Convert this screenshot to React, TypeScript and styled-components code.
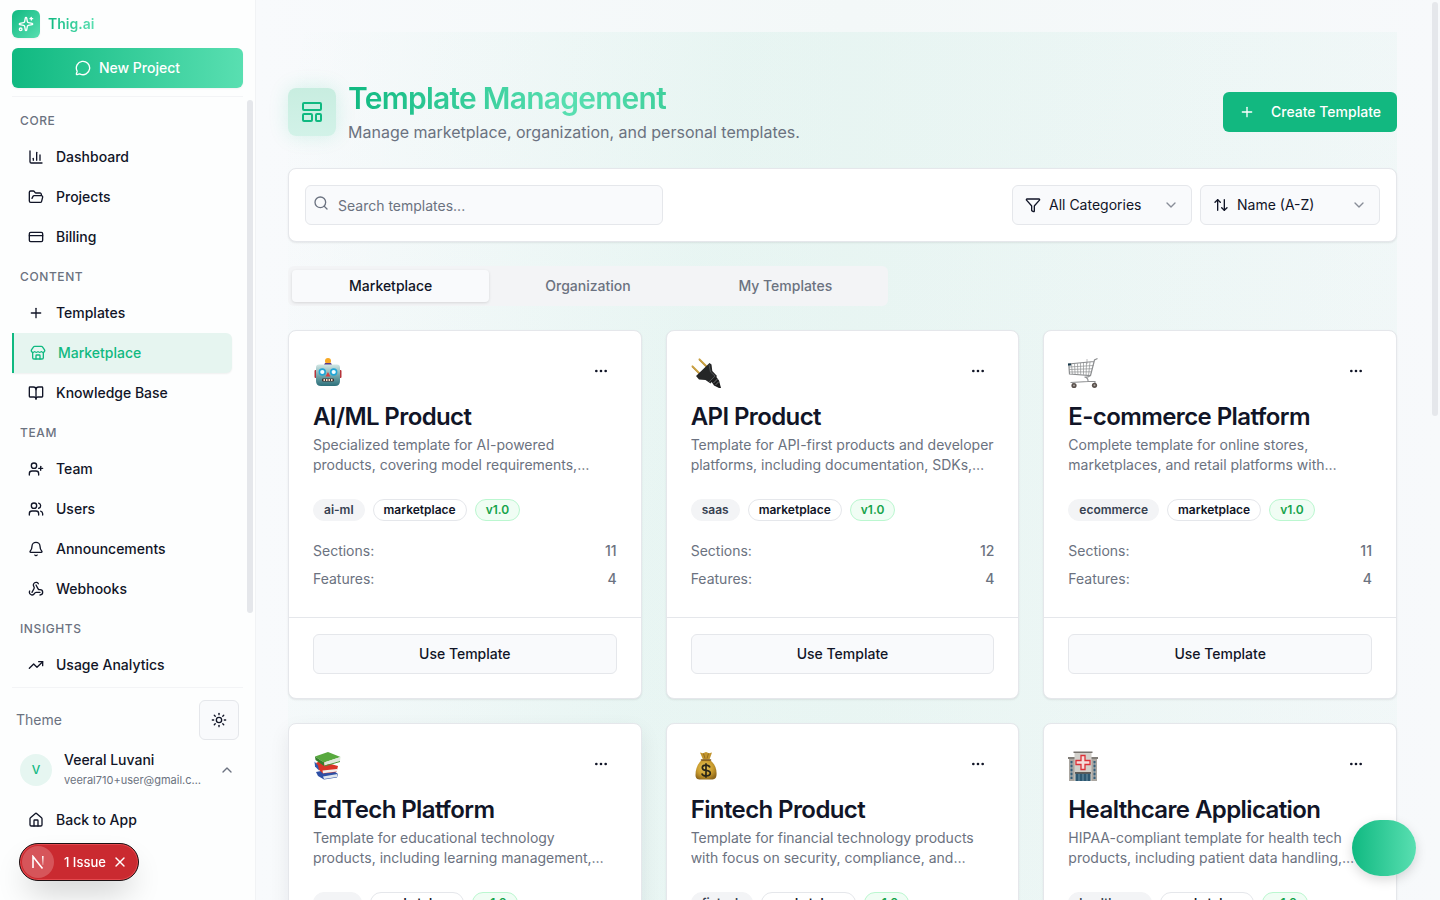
import React from "react";
import styled, { createGlobalStyle, css } from "styled-components";
import {
  ArrowUpDown,
  Bell,
  BookOpen,
  ChartColumn,
  ChevronDown,
  ChevronUp,
  CreditCard,
  Ellipsis,
  FolderOpen,
  Funnel,
  House,
  LayoutTemplate,
  MessageCircle,
  Plus,
  Search,
  Sparkles,
  Store,
  Sun,
  TrendingUp,
  UserPlus,
  Users,
  Webhook,
  X,
  type LucideIcon,
} from "lucide-react";

const color = {
  primary: "#10b981",
  primaryLight: "#59dfb1",
  ink: "#111527",
  muted: "#6b7280",
  border: "#e5e7eb",
  field: "#f9fafc",
  chip: "#f3f4f6",
};

const brandGradient = `linear-gradient(90deg, ${color.primary}, ${color.primaryLight})`;

const GlobalStyle = createGlobalStyle`
  *, *::before, *::after { box-sizing: border-box; }
  body {
    margin: 0;
    font-family: Inter, "Liberation Sans", sans-serif;
    font-size: 14px;
    line-height: 20px;
    color: ${color.ink};
    -webkit-font-smoothing: antialiased;
  }
  h1, h2, h3, p, ul, dl, dd { margin: 0; padding: 0; }
  button, input, select { font: inherit; color: inherit; }
  button { cursor: pointer; }
  a { color: inherit; text-decoration: none; }
  svg { flex-shrink: 0; display: block; }
`;

const Shell = styled.div`
  display: flex;
  height: 100vh;
  overflow: hidden;
`;

/* ---------- Sidebar ---------- */

const Sidebar = styled.aside`
  position: relative;
  display: flex;
  flex-direction: column;
  flex: none;
  width: 256px;
  padding: 10px 12px 0;
  background: #fdfefe;
  border-right: 1px solid #f1f3f5;
`;

const Brand = styled.a`
  display: flex;
  align-items: center;
  gap: 8px;
  align-self: flex-start;
`;

const BrandMark = styled.span`
  display: grid;
  place-items: center;
  width: 28px;
  height: 28px;
  border-radius: 6px;
  color: #fff;
  background: linear-gradient(135deg, ${color.primary}, ${color.primaryLight});
  box-shadow: 0 1px 2px rgba(0, 0, 0, 0.05);
`;

const BrandName = styled.span`
  font-weight: 600;
  background: ${brandGradient};
  background-clip: text;
  color: transparent;
`;

const NewProject = styled.button`
  display: flex;
  align-items: center;
  justify-content: center;
  gap: 8px;
  flex: none;
  height: 40px;
  margin: 10px 0 8px;
  border: 0;
  border-radius: 6px;
  font-weight: 500;
  color: #fff;
  background: ${brandGradient};
  box-shadow: 0 1px 2px rgba(0, 0, 0, 0.05);
`;

const NavScroll = styled.nav`
  flex: 1;
  min-height: 0;
  overflow: hidden;
  padding: 4px 11px 0 0;
  border-top: 1px solid #f3f4f6;
`;

const NavHeading = styled.h2`
  padding: 12px 8px 8px;
  font-size: 12px;
  line-height: 16px;
  font-weight: 500;
  letter-spacing: 0.05em;
  text-transform: uppercase;
  color: ${color.muted};
`;

const NavLink = styled.a<{ $active?: boolean }>`
  display: flex;
  align-items: center;
  gap: 12px;
  height: 40px;
  padding: 0 16px;
  border-radius: 6px;
  font-weight: 500;
  ${({ $active }) =>
    $active &&
    css`
      color: ${color.primary};
      background: #e6f5f0;
      border-left: 2px solid ${color.primary};
      border-radius: 0 6px 6px 0;
      box-shadow: 0 1px 2px rgba(0, 0, 0, 0.06);
    `}
`;

const ScrollThumb = styled.span<{ $place: "nav" | "page" }>`
  position: absolute;
  width: 6px;
  border-radius: 3px;
  background: ${color.border};
  ${({ $place }) =>
    $place === "nav"
      ? css`
          right: 2px;
          top: 100px;
          height: 57%;
        `
      : css`
          right: 2px;
          top: 2px;
          height: 46%;
        `}
`;

const SidebarFooter = styled.div`
  flex: none;
  height: 213px;
  padding: 12px 4px 0;
  border-top: 1px solid #f3f4f6;
`;

const ThemeRow = styled.div`
  display: flex;
  align-items: center;
  justify-content: space-between;
  color: ${color.muted};
`;

const ThemeButton = styled.button`
  display: grid;
  place-items: center;
  width: 40px;
  height: 40px;
  padding: 0;
  border: 1px solid ${color.border};
  border-radius: 6px;
  color: ${color.ink};
  background: ${color.field};
`;

const UserButton = styled.button`
  display: flex;
  align-items: center;
  gap: 12px;
  width: 100%;
  height: 60px;
  padding: 0 4px;
  border: 0;
  background: none;
  text-align: left;
`;

const Avatar = styled.span`
  display: grid;
  place-items: center;
  flex: none;
  width: 32px;
  height: 32px;
  border-radius: 50%;
  font-size: 12px;
  font-weight: 500;
  color: ${color.primary};
  background: #e6f6f1;
`;

const UserText = styled.span`
  flex: 1;
  min-width: 0;
  display: grid;
`;

const UserName = styled.span`
  font-weight: 500;
`;

const UserEmail = styled.span`
  overflow: hidden;
  text-overflow: ellipsis;
  white-space: nowrap;
  font-size: 11px;
  color: ${color.muted};
`;

const UserChevron = styled(ChevronUp)`
  margin-left: 4px;
  color: ${color.muted};
`;

const BackLink = styled(NavLink)`
  padding: 0 12px;
`;

const IssueBadge = styled.div`
  position: fixed;
  left: 19px;
  bottom: 19px;
  display: flex;
  align-items: center;
  height: 38px;
  width: 120px;
  padding: 2px;
  border: 1px solid #1c1214;
  border-radius: 19px;
  font-size: 13px;
  font-weight: 500;
  color: #fff;
  background: #ca2a30;
  box-shadow: inset 0 0 0 1px #e5484d, 0 16px 32px -8px rgba(0, 0, 0, 0.24);
`;

const IssueMark = styled.span`
  display: grid;
  place-items: center;
  width: 32px;
  height: 32px;
  border-radius: 50%;
  background: #d6555a;
`;

const IssueButton = styled.button<{ $text?: boolean }>`
  display: flex;
  padding: 0;
  border: 0;
  background: none;
  margin-left: ${({ $text }) => ($text ? "10px" : "6px")};
`;

/* ---------- Main area ---------- */

const Main = styled.main`
  position: relative;
  flex: 1;
  min-width: 0;
  overflow: hidden;
  padding: 32px 43px 32px 32px;
  background: linear-gradient(90deg, #f8fafc 0%, #f3f8f8 50%, #f7f9fb 100%);
`;

const Page = styled.div`
  display: flex;
  flex-direction: column;
  gap: 24px;
  padding-top: 48px;
  background: linear-gradient(
    100deg,
    rgba(16, 185, 129, 0) 0%,
    rgba(16, 185, 129, 0.055) 35%,
    rgba(16, 185, 129, 0.045) 60%,
    rgba(16, 185, 129, 0.02) 100%
  );
`;

const PageHeader = styled.header`
  display: flex;
  align-items: center;
  justify-content: space-between;
`;

const HeaderLead = styled.div`
  display: flex;
  align-items: center;
  gap: 12px;
`;

const HeaderIcon = styled.span`
  display: grid;
  place-items: center;
  width: 48px;
  height: 48px;
  border-radius: 8px;
  color: ${color.primary};
  background: linear-gradient(180deg, #c8ede0, #d2f2e8);
  box-shadow: 0 0 20px rgba(16, 185, 129, 0.15);
`;

const Title = styled.h1`
  width: fit-content;
  margin-bottom: 4px;
  font-size: 30px;
  line-height: 36px;
  font-weight: 600;
  letter-spacing: -0.025em;
  background: linear-gradient(
    90deg,
    ${color.primary},
    ${color.primaryLight} 70%,
    #3fd09c
  );
  background-clip: text;
  color: transparent;
`;

const Subtitle = styled.p`
  font-size: 16px;
  line-height: 24px;
  color: ${color.muted};
`;

const CreateButton = styled.button`
  display: flex;
  align-items: center;
  gap: 16px;
  height: 40px;
  padding: 0 16px;
  border: 0;
  border-radius: 6px;
  font-weight: 500;
  color: #fff;
  background: #12b880;
`;

const surface = css`
  border: 1px solid ${color.border};
  border-radius: 8px;
  background: #fff;
  box-shadow: 0 1px 2px rgba(0, 0, 0, 0.08);
`;

const FilterBar = styled.form`
  ${surface}
  display: flex;
  align-items: center;
  justify-content: space-between;
  padding: 16px;
`;

const SearchField = styled.label`
  position: relative;
  width: 33.33%;
  color: ${color.muted};

  svg {
    position: absolute;
    left: 8px;
    top: 10px;
  }
`;

const fieldBox = css`
  width: 100%;
  height: 40px;
  border: 1px solid ${color.border};
  border-radius: 6px;
  background: ${color.field};
  outline: none;
`;

const SearchInput = styled.input`
  ${fieldBox}
  display: block;
  padding: 0 12px 0 32px;

  &::placeholder {
    color: ${color.muted};
    opacity: 1;
  }
`;

const SelectGroup = styled.div`
  display: flex;
  gap: 8px;
`;

const SelectField = styled.label`
  position: relative;
  width: 180px;

  svg {
    position: absolute;
    top: 12px;
    left: 13px;
    pointer-events: none;
  }

  svg:last-child {
    left: auto;
    right: 13px;
    color: #888d98;
  }
`;

const SelectInput = styled.select`
  ${fieldBox}
  appearance: none;
  display: block;
  padding: 0 36px;
`;

const TabList = styled.div`
  display: grid;
  grid-template-columns: repeat(3, 1fr);
  max-width: 600px;
  padding: 4px;
  border-radius: 6px;
  background: #f3f4f6;
`;

const Tab = styled.button<{ $active?: boolean }>`
  height: 32px;
  padding: 0;
  border: 0;
  border-radius: 4px;
  font-weight: 500;
  color: ${({ $active }) => ($active ? color.ink : color.muted)};
  background: ${({ $active }) => ($active ? color.field : "transparent")};
  box-shadow: ${({ $active }) =>
    $active ? "0 1px 3px rgba(0, 0, 0, 0.12)" : "none"};
`;

const CardGrid = styled.div`
  display: grid;
  grid-template-columns: repeat(3, minmax(0, 1fr));
  gap: 24px;
`;

const Card = styled.article<{ $raised?: boolean }>`
  ${surface}
  ${({ $raised }) =>
    $raised &&
    css`
      box-shadow: 0 8px 20px rgba(15, 23, 42, 0.08);
    `}
`;

const CardBody = styled.div`
  padding: 24px 24px 28px;
`;

const CardTop = styled.div`
  display: flex;
  align-items: flex-start;
  justify-content: space-between;
  height: 36px;
  margin-bottom: 12px;
`;

const EmojiSvg = styled.svg`
  width: 30px;
  height: 36px;
`;

const MoreButton = styled.button`
  display: grid;
  place-items: center;
  width: 32px;
  height: 32px;
  padding: 0;
  border: 0;
  background: none;
`;

const CardTitle = styled.h3`
  margin-bottom: 4px;
  font-size: 24px;
  line-height: 28px;
  font-weight: 600;
  letter-spacing: -0.025em;
`;

const CardText = styled.p`
  display: -webkit-box;
  -webkit-box-orient: vertical;
  -webkit-line-clamp: 2;
  overflow: hidden;
  color: ${color.muted};
`;

const Badges = styled.div`
  display: flex;
  gap: 8px;
  margin: 24px 0 20px;
`;

const badgeTone = {
  plain: css`
    border-color: ${color.chip};
    background: ${color.chip};
    color: #374151;
  `,
  outline: css`
    border-color: ${color.border};
  `,
  version: css`
    border-color: #bbf7d0;
    background: #f0fdf4;
    color: #16a34a;
  `,
};

const Badge = styled.span<{ $tone: keyof typeof badgeTone }>`
  padding: 2px 10px;
  border: 1px solid;
  border-radius: 11px;
  font-size: 12px;
  line-height: 16px;
  font-weight: 600;
  ${({ $tone }) => badgeTone[$tone]}
`;

const Stats = styled.dl`
  display: grid;
  gap: 8px;
  color: ${color.muted};
`;

const Stat = styled.div`
  display: flex;
  justify-content: space-between;

  dd {
    font-weight: 500;
  }
`;

const CardFooter = styled.div`
  padding: 16px 24px 24px;
  border-top: 1px solid ${color.border};
`;

const UseButton = styled.button`
  ${fieldBox}
  display: block;
  font-weight: 500;
`;

const Fab = styled.button`
  position: fixed;
  right: 24px;
  bottom: 24px;
  width: 64px;
  height: 56px;
  border: 0;
  border-radius: 28px;
  background: ${brandGradient};
  box-shadow: 0 4px 12px rgba(0, 0, 0, 0.15);
`;

/* ---------- Card pictures ---------- */

const RobotArt = () => (
  <EmojiSvg viewBox="0 0 30 36" aria-hidden="true">
    <defs>
      <linearGradient id="robotFace" x1="0" y1="0" x2="0" y2="1">
        <stop offset="0" stopColor="#d3e8e6" />
        <stop offset="0.55" stopColor="#6fa3a8" />
        <stop offset="1" stopColor="#2b6f7a" />
      </linearGradient>
    </defs>
    <circle cx="15" cy="6" r="3" fill="#f7a823" />
    <path d="M12 8h6l1 2h-8z" fill="#5a3c86" />
    <rect x="1.500" y="15" width="3" height="8" rx="1" fill="#b5343a" />
    <rect x="25.500" y="15" width="3" height="8" rx="1" fill="#b5343a" />
    <path d="M6 9.500h18q3 0 3 3V26q0 5-5 5H8q-5 0-5-5V12.500q0-3 3-3z" fill="url(#robotFace)" />
    <circle cx="9.300" cy="17" r="3.700" fill="#20a6d6" />
    <circle cx="20.700" cy="17" r="3.700" fill="#20a6d6" />
    <circle cx="9.300" cy="17" r="2.100" fill="#f3fdff" />
    <circle cx="20.700" cy="17" r="2.100" fill="#f3fdff" />
    <path d="M15 17l2.400 4.500h-4.800z" fill="#d9403f" />
    <rect x="9" y="23.500" width="12" height="3" rx="1" fill="#3f3331" />
    <path d="M10.500 25h1.500M13 25h1.500M15.500 25H17M18 25h1.500" stroke="#f0d9c5" strokeWidth="2" />
  </EmojiSvg>
);

const PlugArt = () => (
  <EmojiSvg viewBox="0 0 30 36" aria-hidden="true">
    <path d="M1 11l8 8M8 4l8 8" stroke="#b98c2d" strokeWidth="1.800" />
    <path d="M1 10.500l8 8M8 3.500l8 8" stroke="#e6c56c" strokeWidth="0.700" />
    <path d="M18.500 8l2 1.500.8 6.500 4.700 5-6.500 7.500-5-3.500-6.500-.5-3-3.500z" fill="#252627" />
    <path d="M18 9.500l1.500 7.500 4.500 4-6 6" fill="none" stroke="#55585a" strokeWidth="0.900" />
    <path d="M20 26l5-4.500 3 4 2 7.500h-2l-5-2.500z" fill="#1b1b1c" />
    <path d="M22.500 28l4-4M24.500 30l3.500-3.500" stroke="#77797b" strokeWidth="0.900" />
  </EmojiSvg>
);

const CartArt = () => (
  <EmojiSvg viewBox="0 0 30 36" aria-hidden="true">
    <g fill="none" stroke="#8d8f91">
      <path d="M29.500 3.500l-3 1.500-4 15.500L1.500 19 .8 9l25-2.500" strokeWidth="1.200" />
      <path d="M3.500 9l.8 10M6.500 8.500l.6 10.700M9.500 8.500l.4 11M12.500 8l.2 11.500M15.500 8v11.700M18.500 7.500l-.4 12.500M22 7l-1.400 13M1 12l24.500-1.500M1.200 14.500l23.500-.8M1.400 17l22.500-.2" strokeWidth="0.700" />
      <path d="M22 20.500q-1 2-5.500 1.500 4 1 3.500 4.500L2.500 27.500M20 26.500h7V30M5 27.500V31" strokeWidth="1.100" />
      <path d="M19 4v5" strokeWidth="0.600" />
    </g>
    <rect x="0" y="8.500" width="3" height="2" fill="#16384b" />
    <circle cx="6" cy="30.500" r="2.600" fill="#5a514d" />
    <circle cx="26.500" cy="30.300" r="2.600" fill="#5a514d" />
    <circle cx="6" cy="30.500" r="1" fill="#aaa4a0" />
    <circle cx="26.500" cy="30.300" r="1" fill="#aaa4a0" />
  </EmojiSvg>
);

const BooksArt = () => (
  <EmojiSvg viewBox="0 0 30 36" aria-hidden="true">
    <path d="M3 24l15-3 7 5-1 3.500-13 2-6-3.500z" fill="#2e4fa5" />
    <path d="M10 28.500l14.500-2.500-.5 3-13 2z" fill="#dfe6ee" />
    <path d="M3 15l4-2 18 5-1.500 6-13.500 1.500L5 21z" fill="#d93526" />
    <path d="M9.500 22.500l14.500-1.500v2.500l-14 1.800z" fill="#f5efeb" />
    <path d="M1.500 13.500l.5 5 4 4-1-5z" fill="#315ab0" />
    <path d="M2 8.500l13-4.500L27.500 9 11 14.500z" fill="#58a93e" />
    <path d="M2 8.500l9 6V18L2.500 12z" fill="#347f2b" />
    <path d="M11 14.500L27.500 9l-.5 4L11.500 17.500z" fill="#dfe9da" />
    <path d="M11.500 18L27 13.500" stroke="#4a9638" strokeWidth="1" />
  </EmojiSvg>
);

const MoneyArt = () => (
  <EmojiSvg viewBox="0 0 30 36" aria-hidden="true">
    <defs>
      <radialGradient id="moneyBag" cx="0.45" cy="0.4" r="0.65">
        <stop offset="0" stopColor="#e9c75c" />
        <stop offset="0.6" stopColor="#c99b2d" />
        <stop offset="1" stopColor="#8d661b" />
      </radialGradient>
    </defs>
    <path d="M9 4.500l3 .8 3-1.300 3 1.300 3-.8-2.500 7h-6.500z" fill="#c2952f" />
    <path d="M12.500 5.500l1.500 5M17.500 5.500l-1.500 5" stroke="#87621b" strokeWidth="0.800" />
    <path d="M11 12h8c5 4 7 9 6.500 15-.3 3.500-2 4.500-5 4.500h-11c-3.500 0-5-1.300-5-4.500C4.500 21 6.500 15.500 11 12z" fill="url(#moneyBag)" />
    <path d="M10.500 12h9" stroke="#7c551a" strokeWidth="1.600" strokeLinecap="round" />
    <path d="M19 19.500q-1-2.300-4-2.300-3.700 0-3.700 2.500 0 2.300 3.800 2.700 4.200.5 4.200 2.900 0 2.600-4.200 2.600-3.600 0-4.300-2.500M15 15.300v14.500" fill="none" stroke="#2b2718" strokeWidth="1.700" />
  </EmojiSvg>
);

const HospitalArt = () => (
  <EmojiSvg viewBox="0 0 30 36" aria-hidden="true">
    <path d="M1 10h28v23H1z" fill="#aaa6a0" />
    <path d="M0 9h30v2H0z" fill="#817d78" />
    <path d="M6.500 4h17v29h-17z" fill="#d2cfca" />
    <path d="M5.500 3.500h19V5h-19z" fill="#77736f" />
    <path d="M2.500 13h2v18h-2zM25.500 13h2v18h-2z" fill="#355f7c" />
    <path d="M2 16h3M2 20h3M2 24h3M2 28h3M25 16h3M25 20h3M25 24h3M25 28h3" stroke="#c2beb8" strokeWidth="1.200" />
    <path d="M13 7.500h4v5h5v4h-5v5h-4v-5H8v-4h5z" fill="#f6dcda" stroke="#dc3038" strokeWidth="1.300" />
    <path d="M7.500 25h15v8h-15z" fill="#2d5872" />
    <path d="M7 24h16v1.800H7z" fill="#5e5b58" />
    <path d="M11 26v7M15 26v7M19 26v7" stroke="#82a4b5" strokeWidth="0.800" />
  </EmojiSvg>
);

/* ---------- Data ---------- */

type NavItem = { label: string; icon: LucideIcon; active?: boolean };

const navGroups: { heading: string; items: NavItem[] }[] = [
  {
    heading: "Core",
    items: [
      { label: "Dashboard", icon: ChartColumn },
      { label: "Projects", icon: FolderOpen },
      { label: "Billing", icon: CreditCard },
    ],
  },
  {
    heading: "Content",
    items: [
      { label: "Templates", icon: Plus },
      { label: "Marketplace", icon: Store, active: true },
      { label: "Knowledge Base", icon: BookOpen },
    ],
  },
  {
    heading: "Team",
    items: [
      { label: "Team", icon: UserPlus },
      { label: "Users", icon: Users },
      { label: "Announcements", icon: Bell },
      { label: "Webhooks", icon: Webhook },
    ],
  },
  {
    heading: "Insights",
    items: [{ label: "Usage Analytics", icon: TrendingUp }],
  },
];

type Template = {
  name: string;
  text: string;
  category: string;
  sections: number;
  features: number;
  Art: () => React.JSX.Element;
  raised?: boolean;
};

const templates: Template[] = [
  {
    name: "AI/ML Product",
    text: "Specialized template for AI-powered products, covering model requirements,…",
    category: "ai-ml",
    sections: 11,
    features: 4,
    Art: RobotArt,
  },
  {
    name: "API Product",
    text: "Template for API-first products and developer platforms, including documentation, SDKs,…",
    category: "saas",
    sections: 12,
    features: 4,
    Art: PlugArt,
  },
  {
    name: "E-commerce Platform",
    text: "Complete template for online stores, marketplaces, and retail platforms with…",
    category: "ecommerce",
    sections: 11,
    features: 4,
    Art: CartArt,
  },
  {
    name: "EdTech Platform",
    text: "Template for educational technology products, including learning management,…",
    category: "saas",
    sections: 11,
    features: 4,
    Art: BooksArt,
    raised: true,
  },
  {
    name: "Fintech Product",
    text: "Template for financial technology products with focus on security, compliance, and…",
    category: "fintech",
    sections: 11,
    features: 4,
    Art: MoneyArt,
  },
  {
    name: "Healthcare Application",
    text: "HIPAA-compliant template for health tech products, including patient data handling,…",
    category: "healthcare",
    sections: 11,
    features: 4,
    Art: HospitalArt,
  },
];

const TemplateCard = ({ template }: { template: Template }) => {
  const { name, text, category, sections, features, Art, raised } = template;
  return (
    <Card $raised={raised}>
      <CardBody>
        <CardTop>
          <Art />
          <MoreButton type="button" aria-label={`More actions for ${name}`}>
            <Ellipsis size={16} />
          </MoreButton>
        </CardTop>
        <CardTitle>{name}</CardTitle>
        <CardText>{text}</CardText>
        <Badges>
          <Badge $tone="plain">{category}</Badge>
          <Badge $tone="outline">marketplace</Badge>
          <Badge $tone="version">v1.0</Badge>
        </Badges>
        <Stats>
          <Stat>
            <dt>Sections:</dt>
            <dd>{sections}</dd>
          </Stat>
          <Stat>
            <dt>Features:</dt>
            <dd>{features}</dd>
          </Stat>
        </Stats>
      </CardBody>
      <CardFooter>
        <UseButton type="button">Use Template</UseButton>
      </CardFooter>
    </Card>
  );
};

export default function App() {
  return (
    <Shell>
      <GlobalStyle />
      <Sidebar>
        <Brand href="#">
          <BrandMark>
            <Sparkles size={16} />
          </BrandMark>
          <BrandName>Thig.ai</BrandName>
        </Brand>
        <NewProject type="button">
          <MessageCircle size={16} />
          New Project
        </NewProject>
        <NavScroll aria-label="Main">
          {navGroups.map(({ heading, items }) => (
            <section key={heading}>
              <NavHeading>{heading}</NavHeading>
              {items.map(({ label, icon: Icon, active }) => (
                <NavLink
                  key={label}
                  href="#"
                  $active={active}
                  aria-current={active ? "page" : undefined}
                >
                  <Icon size={16} />
                  {label}
                </NavLink>
              ))}
            </section>
          ))}
        </NavScroll>
        <ScrollThumb $place="nav" />
        <SidebarFooter>
          <ThemeRow>
            Theme
            <ThemeButton type="button" aria-label="Toggle theme">
              <Sun size={16} />
            </ThemeButton>
          </ThemeRow>
          <UserButton type="button">
            <Avatar>V</Avatar>
            <UserText>
              <UserName>Veeral Luvani</UserName>
              <UserEmail>veeral710+user@gmail.com</UserEmail>
            </UserText>
            <UserChevron size={16} />
          </UserButton>
          <BackLink href="#">
            <House size={16} />
            Back to App
          </BackLink>
        </SidebarFooter>
      </Sidebar>

      <Main>
        <Page>
          <PageHeader>
            <HeaderLead>
              <HeaderIcon>
                <LayoutTemplate size={24} />
              </HeaderIcon>
              <div>
                <Title>Template Management</Title>
                <Subtitle>
                  Manage marketplace, organization, and personal templates.
                </Subtitle>
              </div>
            </HeaderLead>
            <CreateButton type="button">
              <Plus size={16} />
              Create Template
            </CreateButton>
          </PageHeader>

          <FilterBar onSubmit={(event) => event.preventDefault()}>
            <SearchField>
              <SearchInput
                type="search"
                aria-label="Search templates"
                placeholder="Search templates..."
              />
              <Search size={16} />
            </SearchField>
            <SelectGroup>
              <SelectField>
                <Funnel size={16} />
                <SelectInput aria-label="Category">
                  <option>All Categories</option>
                </SelectInput>
                <ChevronDown size={16} />
              </SelectField>
              <SelectField>
                <ArrowUpDown size={16} />
                <SelectInput aria-label="Sort order">
                  <option>Name (A-Z)</option>
                </SelectInput>
                <ChevronDown size={16} />
              </SelectField>
            </SelectGroup>
          </FilterBar>

          <TabList role="tablist">
            <Tab type="button" role="tab" aria-selected="true" $active>
              Marketplace
            </Tab>
            <Tab type="button" role="tab" aria-selected="false">
              Organization
            </Tab>
            <Tab type="button" role="tab" aria-selected="false">
              My Templates
            </Tab>
          </TabList>

          <CardGrid>
            {templates.map((template) => (
              <TemplateCard key={template.name} template={template} />
            ))}
          </CardGrid>
        </Page>
        <ScrollThumb $place="page" />
      </Main>

      <IssueBadge>
        <IssueMark>
          <svg width="14" height="14" viewBox="0 0 14 14" fill="none" aria-hidden="true">
            <defs>
              <linearGradient id="markFade" x1="0" y1="0" x2="0" y2="1">
                <stop offset="0" stopColor="#fff" />
                <stop offset="1" stopColor="#fff" stopOpacity="0.2" />
              </linearGradient>
            </defs>
            <path d="M2 13V1.500L11.500 13.500" stroke="#fff" strokeWidth="1.600" />
            <path d="M11 1h1.600v9H11z" fill="url(#markFade)" />
          </svg>
        </IssueMark>
        <IssueButton type="button" $text>
          1 Issue
        </IssueButton>
        <IssueButton type="button" aria-label="Dismiss issue">
          <X size={16} />
        </IssueButton>
      </IssueBadge>
      <Fab type="button" aria-label="Open assistant" />
    </Shell>
  );
}
